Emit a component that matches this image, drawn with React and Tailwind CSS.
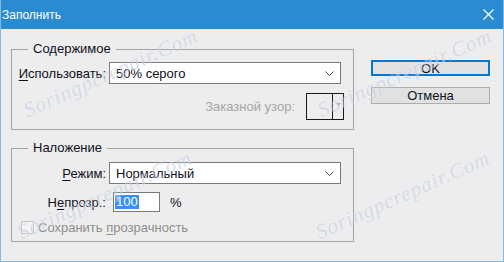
import React from "react";

const F = { fontFamily: '"Liberation Sans", Arial, sans-serif' };

function Chevron() {
  return (
    <svg width="9" height="5" viewBox="0 0 9 5" className="shrink-0">
      <polyline points="0.5,0.5 4.5,4.5 8.5,0.5" fill="none" stroke="#444" strokeWidth="1" />
    </svg>
  );
}

function Select({ value }) {
  return (
    <div className="flex items-center justify-between w-[232px] h-[22px] bg-white border border-[#7a7a7a] pl-[6px] pr-[6px] text-[13px] text-[#101020]">
      <span className="leading-none">{value}</span>
      <Chevron />
    </div>
  );
}

function Watermark({ className }) {
  return (
    <div
      className={
        "absolute pointer-events-none select-none italic text-[21px] tracking-[1px] text-[#c3cce3] opacity-60 -rotate-[24deg] origin-left whitespace-nowrap " +
        className
      }
      style={{ fontFamily: '"Liberation Serif", serif', textShadow: "0 0 2px #fff" }}
    >
      Soringpcrepair.Com
    </div>
  );
}

export default function App() {
  return (
    <div
      className="relative w-[504px] h-[262px] bg-[#ededed] border-l border-r border-b border-[#7fbbe8] overflow-hidden flex flex-col"
      style={F}
    >
      <div className="h-[29px] shrink-0 bg-[#2b8bd1] flex items-center justify-between pl-[2px] pr-[10px] -mx-px">
        <span className="text-white text-[12px] leading-none">Заполнить</span>
        <svg width="11" height="11" viewBox="0 0 11 11">
          <path d="M0.5 0.5 L10.5 10.5 M10.5 0.5 L0.5 10.5" stroke="#fff" strokeWidth="1.1" />
        </svg>
      </div>

      <div className="flex pt-[12px] pl-[10px]">
        <div className="w-[343px] flex flex-col gap-[10px]">
          <fieldset className="border border-[#a3a3a3] px-0 pb-[9px]">
            <legend className="ml-[16px] px-[5px] text-[13px] leading-[16px] text-[#101020]">Содержимое</legend>
            <div className="flex flex-col pt-[5px]">
              <div className="flex items-center">
                <div className="w-[97px] pr-[3px] text-right text-[13px] text-[#101020] leading-none">
                  <span className="underline underline-offset-2">И</span>спользовать:
                </div>
                <Select value="50% серого" />
              </div>
              <div className="flex items-center justify-end pr-[9px] mt-[9px]">
                <span className="text-[13px] text-[#a6a6a6] leading-none mr-[11px]">Заказной узор:</span>
                <div className="w-[38px] h-[27px] border border-[#1a1a1a] flex bg-[#ededed]">
                  <div className="flex-1" />
                  <div className="w-[11px] border-l border-[#1a1a1a] flex items-start justify-center pt-[9px]">
                    <svg width="5" height="3" viewBox="0 0 5 3">
                      <polygon points="0,0 5,0 2.5,3" fill="#a0a0a0" />
                    </svg>
                  </div>
                </div>
              </div>
            </div>
          </fieldset>

          <fieldset className="border border-[#a3a3a3] px-0 pb-[7px]">
            <legend className="ml-[16px] px-[5px] text-[13px] leading-[16px] text-[#101020]">Наложение</legend>
            <div className="flex flex-col pt-[6px]">
              <div className="flex items-center">
                <div className="w-[97px] pr-[3px] text-right text-[13px] text-[#101020] leading-none">
                  <span className="underline underline-offset-2">Р</span>ежим:
                </div>
                <Select value="Нормальный" />
              </div>
              <div className="flex items-center mt-[8px]">
                <div className="w-[97px] pr-[3px] text-right text-[13px] text-[#101020] leading-none">
                  Н<span className="underline underline-offset-2">е</span>прозр.:
                </div>
                <div className="ml-[4px] w-[47px] h-[20px] bg-white border border-[#7a7a7a] flex items-center pl-[1px]">
                  <span className="bg-[#3390ff] text-white text-[13px] leading-[14px] px-[1px]">100</span>
                </div>
                <span className="ml-[10px] text-[13px] text-[#101020] leading-none">%</span>
              </div>
              <div className="flex items-center mt-[9px] ml-[9px]">
                <div className="w-[13px] h-[13px] border border-[#c4c4c4] bg-[#f4f4f4]" />
                <span className="ml-[4px] text-[13px] text-[#8e8e8e] leading-none">
                  Сохранить <span className="underline underline-offset-2">п</span>розрачность
                </span>
              </div>
            </div>
          </fieldset>
        </div>

        <div className="ml-[17px] mt-[19px] flex flex-col gap-[11px]">
          <button className="w-[119px] h-[16px] border-2 border-[#0078d7] bg-[#e1e1e1] flex items-center justify-center text-[13px] text-[#101020] leading-none">
            OK
          </button>
          <button className="w-[119px] h-[17px] border border-[#adadad] bg-[#e1e1e1] flex items-center justify-center text-[13px] text-[#101020] leading-none">
            Отмена
          </button>
        </div>
      </div>

      <Watermark className="left-[24px] top-[96px]" />
      <Watermark className="left-[318px] top-[96px]" />
      <Watermark className="left-[18px] top-[218px]" />
      <Watermark className="left-[316px] top-[218px]" />
    </div>
  );
}
